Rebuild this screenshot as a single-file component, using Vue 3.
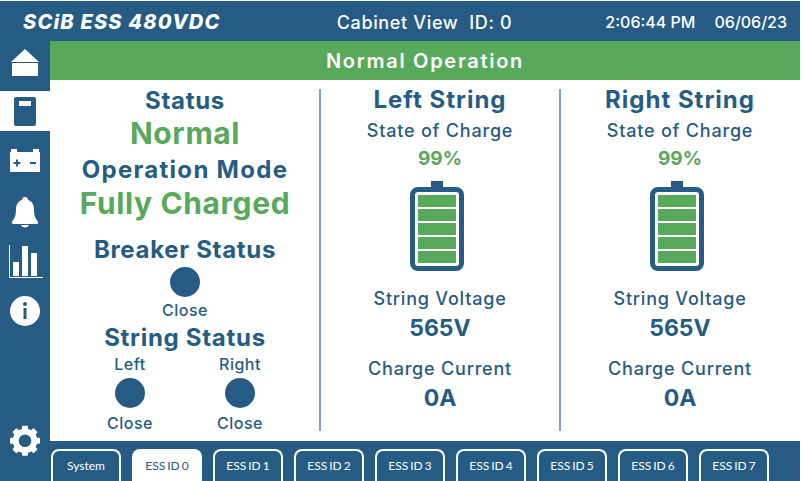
<script setup>
const tabs = ['System', 'ESS ID 0', 'ESS ID 1', 'ESS ID 2', 'ESS ID 3', 'ESS ID 4', 'ESS ID 5', 'ESS ID 6', 'ESS ID 7']
const strings = ['Left String', 'Right String']
const cells = [1, 2, 3, 4, 5]
const breakers = ['Left', 'Right']
const gearAngles = [0, 45, 90, 135, 180, 225, 270, 315]
</script>

<template>
  <div class="screen">
    <header class="top">
      <div class="brand">SCiB ESS 480VDC</div>
      <div class="view">Cabinet View&nbsp; ID: 0</div>
      <div class="clock"><span>2:06:44 PM</span><span>06/06/23</span></div>
    </header>

    <nav class="side">
      <div class="item home">
        <svg width="50" height="50" viewBox="0 0 50 50"><path d="M25 8 39 21H11Z" fill="#fff"/><rect x="12" y="22" width="26" height="13" fill="#fff"/></svg>
      </div>
      <div class="item active">
        <svg width="50" height="40" viewBox="0 0 50 40"><rect x="14" y="6" width="22" height="29" rx="2" fill="#265c83"/><rect x="19" y="10" width="12" height="5" fill="#fff"/></svg>
      </div>
      <div class="item gapped">
        <svg width="50" height="50" viewBox="0 0 50 50">
          <path d="M10 16h1v-3h6v3h16v-3h6v3h1v20H10Z" fill="#fff"/>
          <path d="M13.500 27h7M17 23.500v7M30 27h6" stroke="#265c83" stroke-width="2" fill="none"/>
        </svg>
      </div>
      <div class="item">
        <svg width="50" height="50" viewBox="0 0 50 50"><path d="M25 11c1.700 0 3 1.200 3 3 4 1 6 5 6 9 0 6 1 9 4 12.500.6 1 0 2.500-1.500 2.500H13.500c-1.500 0-2.100-1.500-1.500-2.500 3-3.500 4-6.500 4-12.500 0-4 2-8 6-9 0-1.800 1.300-3 3-3Z" fill="#fff"/><path d="M21 39h8c-.5 1.500-2 2.500-4 2.500s-3.500-1-4-2.500Z" fill="#fff"/></svg>
      </div>
      <div class="item">
        <svg width="50" height="50" viewBox="0 0 50 50">
          <path d="M9.500 9v32.500H43" stroke="#fff" stroke-width="1" fill="none"/>
          <rect x="13" y="26" width="6" height="14" fill="#fff"/>
          <rect x="22" y="10" width="6" height="30" fill="#fff"/>
          <rect x="31" y="17" width="6" height="23" fill="#fff"/>
        </svg>
      </div>
      <div class="item">
        <svg width="50" height="50" viewBox="0 0 50 50">
          <circle cx="25" cy="25" r="15" fill="#fff"/>
          <circle cx="25" cy="18" r="2" fill="#265c83"/>
          <rect x="23.500" y="22" width="3" height="11" fill="#265c83"/>
        </svg>
      </div>
      <div class="item gear">
        <svg width="50" height="50" viewBox="0 0 50 50">
          <circle cx="25" cy="24.700" r="9.300" fill="none" stroke="#fff" stroke-width="6"/>
          <g fill="#fff">
            <rect v-for="a in gearAngles" :key="a" x="22" y="9.700" width="6" height="6" rx="1" :transform="`rotate(${a} 25 24.700)`"/>
          </g>
        </svg>
      </div>
    </nav>

    <main class="main">
      <div class="banner">Normal Operation</div>
      <div class="columns">
        <section class="col first">
          <div class="h1 status">Status</div>
          <div class="big normal">Normal</div>
          <div class="h1 mode">Operation Mode</div>
          <div class="big">Fully Charged</div>
          <div class="h1 breaker">Breaker Status</div>
          <div class="dot"></div>
          <div class="small close">Close</div>
          <div class="h1 strstat">String Status</div>
          <div class="pair">
            <div v-for="b in breakers" :key="b" class="unit">
              <div class="small">{{ b }}</div>
              <div class="dot"></div>
              <div class="small close2">Close</div>
            </div>
          </div>
        </section>
        <section v-for="s in strings" :key="s" class="col string">
          <div class="h1 title">{{ s }}</div>
          <div class="label soc">State of Charge</div>
          <div class="pct">99%</div>
          <div class="battery">
            <div class="cap"></div>
            <div class="body">
              <div v-for="c in cells" :key="c" class="cell"></div>
            </div>
          </div>
          <div class="label volt">String Voltage</div>
          <div class="value">565V</div>
          <div class="label curr">Charge Current</div>
          <div class="value">0A</div>
        </section>
      </div>
    </main>

    <footer class="tabs">
      <div v-for="t in tabs" :key="t" class="tab" :class="{ on: t === 'ESS ID 0' }">{{ t }}</div>
    </footer>
  </div>
</template>

<style scoped>
.screen {
  width: 800px;
  height: 480px;
  margin-top: 1px;
  display: grid;
  grid-template-columns: 50px 750px;
  grid-template-rows: 40px 400px 40px;
  background: #265c83;
  font-family: Inter, "Open Sans", sans-serif;
  color: #265c83;
  overflow: hidden;
}
.top {
  grid-column: 1 / 3;
  display: flex;
  align-items: center;
  color: #fff;
  padding-top: 2px;
  box-sizing: border-box;
}
.brand {
  width: 320px;
  padding-left: 23px;
  box-sizing: border-box;
  font-size: 20px;
  font-weight: 800;
  font-style: italic;
  letter-spacing: 1.2px;
}
.view {
  width: 209px;
  text-align: center;
  font-size: 18px;
  font-weight: 500;
  letter-spacing: .65px;
}
.clock {
  flex: 1;
  display: flex;
  justify-content: flex-end;
  gap: 19px;
  padding-right: 13px;
  font-size: 16px;
  font-weight: 500;
}
.side {
  grid-row: 2 / 4;
  grid-column: 1;
  display: flex;
  flex-direction: column;
  position: relative;
  z-index: 1;
}
.item { display: flex; flex: none; }
.item svg { display: block; }
.active { background: #fff; height: 40px; }
.gapped { margin-top: 5px; }
.gear { margin-top: auto; margin-bottom: 15px; }
.main {
  grid-row: 2;
  grid-column: 2;
  background: #fff;
  display: flex;
  flex-direction: column;
}
.banner {
  height: 39px;
  flex: none;
  box-sizing: border-box;
  padding-top: 2px;
  background: #58a95b;
  color: #fff;
  font-size: 20px;
  font-weight: 600;
  letter-spacing: 1.7px;
  line-height: 37px;
  text-align: center;
}
.columns {
  display: grid;
  grid-template-columns: 270px 240px 240px;
  padding-top: 9px;
}
.col {
  display: flex;
  flex-direction: column;
  align-items: center;
  height: 342px;
  text-align: center;
}
.string { border-left: 2px solid #7fa1ba; margin-left: -1px; padding-right: 1px; box-sizing: border-box; }
.h1 { font-size: 24px; font-weight: 700; line-height: 24px; letter-spacing: .7px; }
.big { font-size: 30px; font-weight: 700; color: #58a95b; line-height: 34px; letter-spacing: .6px; }
.normal { margin-top: 3px; }
.mode { height: 33px; line-height: 33px; margin-top: 3px; letter-spacing: 1.3px; }
.breaker { margin-top: 17px; height: 26px; line-height: 26px; }
.dot { width: 30px; height: 30px; border-radius: 50%; background: #265c83; flex: none; }
.breaker + .dot { margin-top: 4px; }
.small { font-size: 16px; font-weight: 500; line-height: 20px; letter-spacing: .5px; }
.close { margin-top: 3px; }
.strstat { height: 28px; line-height: 28px; margin-top: 4px; }
.pair { display: flex; gap: 60px; margin-top: 2px; }
.unit { width: 50px; display: flex; flex-direction: column; align-items: center; }
.unit .dot { margin-top: 4px; }
.close2 { margin-top: 5px; }
.title { letter-spacing: 1px; margin-top: -1px; height: 24px; }
.label { font-size: 18px; font-weight: 500; line-height: 22px; letter-spacing: .8px; }
.soc { margin-top: 8px; height: 22px; }
.pct { font-size: 19px; font-weight: 700; color: #58a95b; line-height: 24px; margin-top: 5px; }
.battery { display: flex; flex-direction: column; align-items: center; margin: 10px 6px 0 0; }
.cap { width: 12px; height: 6px; background: #265c83; }
.body {
  width: 54px;
  height: 84px;
  box-sizing: border-box;
  border: 5px solid #265c83;
  border-radius: 8px;
  padding: 3px;
  display: flex;
  flex-direction: column;
  gap: 2px;
}
.cell { height: 12px; background: #58a95b; flex: none; }
.volt { margin-top: 17px; }
.value { font-size: 23px; font-weight: 700; line-height: 30px; margin-top: 3px; }
.curr { margin-top: 15px; }
.tabs {
  grid-row: 3;
  grid-column: 2;
  display: flex;
  gap: 11px;
  padding: 8px 0 0 1px;
  box-sizing: border-box;
}
.tab {
  width: 70px;
  box-sizing: border-box;
  border: 2px solid #fff;
  border-bottom: none;
  border-radius: 8px 8px 0 0;
  color: #fff;
  font-family: Lato, sans-serif;
  font-size: 12px;
  word-spacing: -1px;
  line-height: 30px;
  text-align: center;
}
.tab.on { background: #fff; color: #265c83; }
</style>

<style>
html, body { background: #fff; margin: 0; }
</style>
